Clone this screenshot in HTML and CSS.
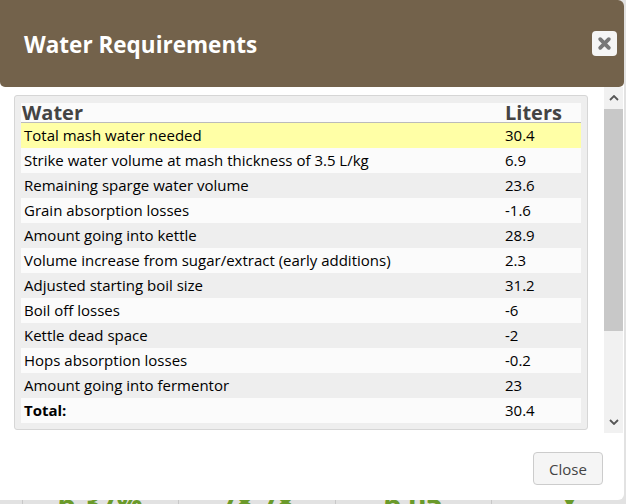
FILE: index.html
```html
<!DOCTYPE html>
<html lang="en">
<head>
<meta charset="utf-8">
<title>Water Requirements</title>
<link rel="stylesheet" href="styles.css">
</head>
<body>
<div class="backdrop">
  <div class="peek">
    <span class="peek-cell">6.37%</span>
    <span class="peek-cell">78 78</span>
    <span class="peek-cell">6.05</span>
    <span class="peek-cell">Y</span>
  </div>
</div>
<div class="modal">
  <header class="modal-header">
    <h1 class="modal-title">Water Requirements</h1>
    <button class="close-x" aria-label="Close">
      <svg viewBox="0 0 14 14" width="15" height="15"><path d="M3 3 L11 11 M11 3 L3 11" stroke="#777" stroke-width="3.6" stroke-linecap="round" fill="none"/></svg>
    </button>
  </header>
  <div class="modal-body">
    <div class="scroller">
      <div class="well">
        <table class="water">
          <thead><tr><th>Water</th><th class="num">Liters</th></tr></thead>
          <tbody>
            <tr class="hl"><td>Total mash water needed</td><td class="num">30.4</td></tr>
            <tr><td>Strike water volume at mash thickness of 3.5 L/kg</td><td class="num">6.9</td></tr>
            <tr class="alt"><td>Remaining sparge water volume</td><td class="num">23.6</td></tr>
            <tr><td>Grain absorption losses</td><td class="num">-1.6</td></tr>
            <tr class="alt"><td>Amount going into kettle</td><td class="num">28.9</td></tr>
            <tr><td>Volume increase from sugar/extract (early additions)</td><td class="num">2.3</td></tr>
            <tr class="alt"><td>Adjusted starting boil size</td><td class="num">31.2</td></tr>
            <tr><td>Boil off losses</td><td class="num">-6</td></tr>
            <tr class="alt"><td>Kettle dead space</td><td class="num">-2</td></tr>
            <tr><td>Hops absorption losses</td><td class="num">-0.2</td></tr>
            <tr class="alt"><td>Amount going into fermentor</td><td class="num">23</td></tr>
            <tr class="total"><td>Total:</td><td class="num">30.4</td></tr>
          </tbody>
        </table>
      </div>
    </div>
    <div class="scrollbar">
      <div class="arrow"><svg viewBox="0 0 10 6" width="10" height="6"><path d="M1 5 L5 1 L9 5" stroke="#555" stroke-width="1.8" fill="none"/></svg></div>
      <div class="track"><div class="thumb"></div></div>
      <div class="arrow"><svg viewBox="0 0 10 6" width="10" height="6"><path d="M1 1 L5 5 L9 1" stroke="#555" stroke-width="1.8" fill="none"/></svg></div>
    </div>
  </div>
  <footer class="modal-footer">
    <button class="close-btn">Close</button>
  </footer>
</div>
</body>
</html>
```
FILE: styles.css
```css
* { box-sizing: border-box; }
html, body { margin: 0; height: 100%; overflow: hidden; background: #fff; }
body { width: 626px; height: 504px; position: relative; font-family: "Open Sans", sans-serif; color: #000; }
.backdrop { position: absolute; inset: 0; background: #e2e2e2; display: flex; align-items: flex-end; }
.peek { width: 100%; height: 8px; display: flex; padding-left: 22px; overflow: hidden; }
.peek-cell { width: 156.3px; height: 30px; flex: none; border-left: 1px solid #c8c8c8; color: #6a9a2a; font-size: 29px; font-weight: 700; text-align: center; line-height: 30px; margin-top: -9px; }
.modal { position: relative; width: 624px; height: 500px; background: #fff; border-radius: 0 6px 6px 0; display: flex; flex-direction: column; overflow: hidden; }
.modal-header { height: 87px; background: #73624b; flex: none; display: flex; align-items: flex-start; justify-content: space-between; padding: 30px 7px 0 24px; border-radius: 0 0 5px 5px; }
.modal-title { margin: 0; color: #fff; font-size: 22.5px; font-weight: 700; line-height: 30px; }
.close-x { width: 25px; height: 25px; margin-top: 1px; border: 0; padding: 0; border-radius: 4px; background: #f5f5f5; display: flex; align-items: center; justify-content: center; }
.modal-body { height: 346px; flex: none; display: flex; }
.scroller { flex: 1; padding: 8px 16px 0 14px; }
.well { height: 335px; background: #eee; border: 1px solid #d6d6d6; border-radius: 3px; padding: 7px 6px 6px; }
.water { width: 100%; border-collapse: collapse; table-layout: fixed; font-size: 15px; background: #fbfbfb; }
.water th { height: 19px; padding: 1px 0 0 1px; text-align: left; font-size: 20px; font-weight: 700; color: #444; line-height: 18px; border-bottom: 1px solid #bbb; background: #fbfbfb; }
.water td { height: 25px; padding: 0 0 0 3px; line-height: 25px; white-space: nowrap; }
.water .num { width: 76px; padding-left: 0; }
.water .alt td { background: #eee; }
.water .hl td { background: #ffffa6; }
.water .total td:first-child { font-weight: 700; }
.scrollbar { width: 19px; height: 346px; margin-right: 1px; flex: none; background: #f1f1f1; display: flex; flex-direction: column; }
.arrow { height: 22px; display: flex; align-items: center; justify-content: center; flex: none; background: #f1f1f1; }
.track { flex: 1; background: #f1f1f1; }
.thumb { height: 222px; background: #c8c8c8; }
.modal-footer { flex: 1; display: flex; justify-content: flex-end; align-items: flex-start; padding: 19px 21px 0 0; }
.close-btn { width: 70px; height: 33px; border: 1px solid #ccc; border-radius: 4px; background: #f5f5f5; color: #444; font: 15px "Open Sans", sans-serif; padding: 0; }
```
